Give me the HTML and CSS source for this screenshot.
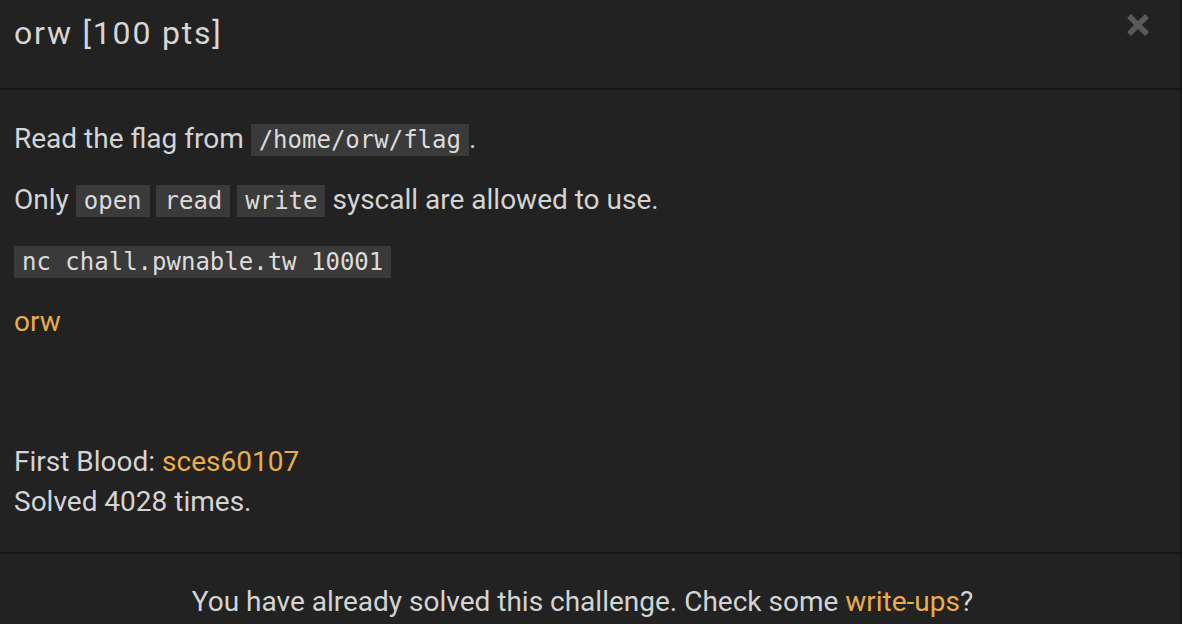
FILE: index.html
```html
<!DOCTYPE html>
<html lang="en">
<head>
<meta charset="utf-8">
<title>orw [100 pts]</title>
<link rel="stylesheet" href="styles.css">
</head>
<body>
<div class="modal">
  <div class="modal-header">
    <h4 class="modal-title">orw [100 pts]</h4>
    <button class="close" type="button" aria-label="Close">
      <svg width="22" height="22" viewBox="0 0 22 22"><path d="M4 4 L18 18 M18 4 L4 18" stroke="#5a5a5a" stroke-width="5.5" stroke-linecap="square" fill="none"/></svg>
    </button>
  </div>
  <div class="modal-body">
    <p>Read the flag from <code>/home/orw/flag</code>.</p>
    <p>Only <code>open</code> <code>read</code> <code>write</code> syscall are allowed to use.</p>
    <p><code>nc chall.pwnable.tw 10001</code></p>
    <p><a class="link" href="#">orw</a></p>
    <div class="stats">
      <div>First Blood: <a class="link" href="#">sces60107</a></div>
      <div>Solved 4028 times.</div>
    </div>
  </div>
  <div class="modal-footer">
    You have already solved this challenge. Check some <a class="link" href="#">write-ups</a>?
  </div>
</div>
</body>
</html>
```
FILE: styles.css
```css
html, body {
  margin: 0;
  padding: 0;
  background: #141414;
}
body {
  font-family: Roboto, "Liberation Sans", sans-serif;
  color: #d4d4d4;
}
.modal {
  width: 1180px;
  height: 624px;
  background: #222222;
  overflow: hidden;
}
.modal-header {
  height: 90px;
  box-sizing: border-box;
  padding: 13px 31px 0 14px;
  display: flex;
  justify-content: space-between;
  align-items: flex-start;
  border-bottom: 2px solid #151515;
}
.modal-title {
  margin: 0;
  font-size: 32px;
  font-weight: 400;
  letter-spacing: 1.8px;
  line-height: 40px;
  color: #d6d6d6;
}
.close {
  background: none;
  border: 0;
  padding: 0;
  margin-top: 1px;
  width: 22px;
  height: 22px;
  cursor: pointer;
}
.close svg { display: block; }
.modal-body {
  padding: 29px 14px 30px 14px;
  font-size: 28px;
  line-height: 40px;
}
.modal-body p {
  margin: 0 0 20px 0;
}
code {
  font-family: "DejaVu Sans Mono", "Liberation Mono", monospace;
  font-size: 24px;
  background: #3a3a3a;
  color: #dcdcdc;
  padding: 2px 8px;
}
.link {
  color: #e9ad4e;
  text-decoration: none;
}
.stats {
  margin-top: 100px;
}
.modal-footer {
  border-top: 2px solid #151515;
  padding: 28px 15px 0 0;
  text-align: center;
  font-size: 28px;
  line-height: 40px;
}
```
